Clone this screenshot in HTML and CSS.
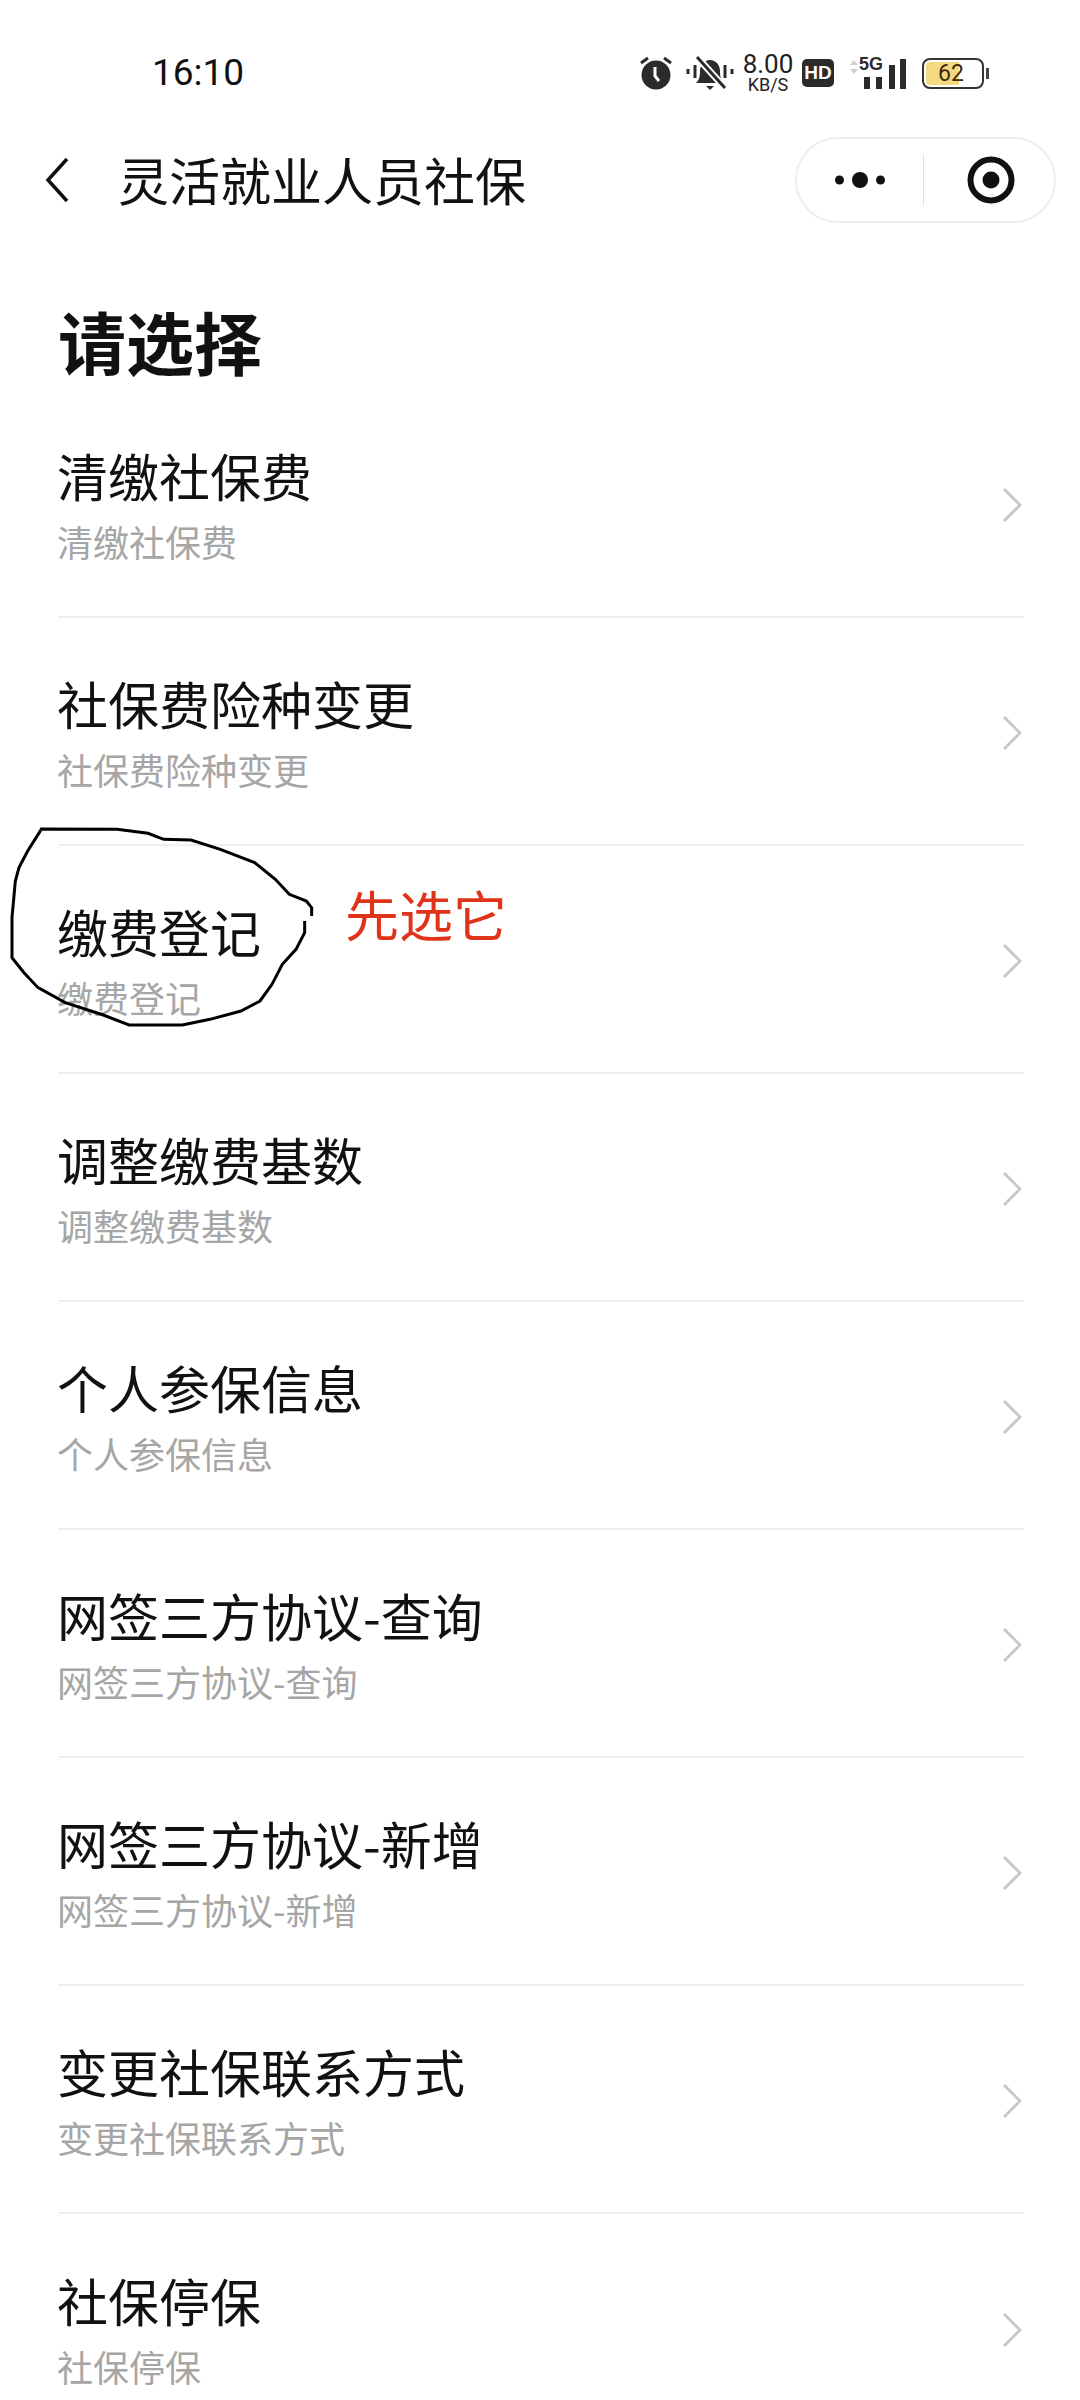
FILE: index.html
```html
<!DOCTYPE html>
<html lang="zh-CN">
<head>
    <meta charset="UTF-8">
    <title>灵活就业人员社保</title>
    <link rel="stylesheet" href="styles.css">
</head>
<body>
    <div class="page">
        <div class="status-bar">
            <span class="time">16:10</span>
            <div class="status-icons">
                <svg class="ic-alarm" width="34" height="34" viewBox="0 0 34 34">
                    <circle cx="17" cy="19" r="14.5" fill="#2b2b2b"/>
                    <path d="M2 7l7-5M32 7l-7-5" stroke="#2b2b2b" stroke-width="3" fill="none"/>
                    <path d="M16 11v9l4 5" stroke="#fff" stroke-width="3" fill="none"/>
                </svg>
                <svg class="ic-bell" width="48" height="36" viewBox="0 0 48 36">
                    <path d="M2 14v5M9 10v13M39 10v13M46 14v5" stroke="#2b2b2b" stroke-width="3" fill="none"/>
                    <path d="M10 28c3-3 4-6 4-12 0-6 4-11 10-11s10 5 10 11c0 6 1 9 4 12z" fill="#2b2b2b"/>
                    <path d="M20 31h8l-4 4z" fill="#2b2b2b"/>
                    <path d="M11 2l28 31" stroke="#fff" stroke-width="7" fill="none"/>
                    <path d="M11 2l28 31" stroke="#2b2b2b" stroke-width="3" fill="none"/>
                </svg>
                <div class="speed">
                    <span class="speed-num">8.00</span>
                    <span class="speed-unit">KB/S</span>
                </div>
                <span class="hd">HD</span>
                <div class="signal">
                    <svg width="56" height="32" viewBox="0 0 56 32">
                        <path d="M0 8l4-5 4 5zM0 12l4 5 4-5z" fill="#cfcfcf"/>
                        <path d="M14 20h6v12h-6zM26 20h6v12h-6zM39 8h6v24h-6zM50 2h6v30h-6z" fill="#2b2b2b"/>
                    </svg>
                    <span class="signal-label">5G</span>
                </div>
                <div class="battery">
                    <div class="battery-body">
                        <div class="battery-fill"></div>
                        <span class="battery-num">62</span>
                    </div>
                    <div class="battery-tip"></div>
                </div>
            </div>
        </div>

        <div class="nav">
            <svg class="back" width="24" height="46" viewBox="0 0 24 46">
                <path d="M22 2L3 23l19 21" stroke="#111" stroke-width="3.5" fill="none"/>
            </svg>
            <span class="nav-title">灵活就业人员社保</span>
            <div class="capsule">
                <div class="capsule-part">
                    <svg width="50" height="20" viewBox="0 0 50 20">
                        <circle cx="4.500" cy="10" r="4.500" fill="#111"/>
                        <circle cx="25" cy="10" r="8" fill="#111"/>
                        <circle cx="45.500" cy="10" r="4.500" fill="#111"/>
                    </svg>
                </div>
                <div class="capsule-line"></div>
                <div class="capsule-part capsule-record">
                    <svg width="48" height="48" viewBox="0 0 48 48">
                        <circle cx="24" cy="24" r="20.500" stroke="#111" stroke-width="6" fill="none"/>
                        <circle cx="24" cy="24" r="8.500" fill="#111"/>
                    </svg>
                </div>
            </div>
        </div>

        <h1 class="heading">请选择</h1>

        <div class="list">
            <div class="row">
                <div class="row-text">
                    <div class="row-title">清缴社保费</div>
                    <div class="row-sub">清缴社保费</div>
                </div>
                <svg class="arrow" width="20" height="36" viewBox="0 0 20 36"><path d="M2 2l16 16L2 34" stroke="#c8c8c8" stroke-width="3" fill="none"/></svg>
            </div>
            <div class="row">
                <div class="row-text">
                    <div class="row-title">社保费险种变更</div>
                    <div class="row-sub">社保费险种变更</div>
                </div>
                <svg class="arrow" width="20" height="36" viewBox="0 0 20 36"><path d="M2 2l16 16L2 34" stroke="#c8c8c8" stroke-width="3" fill="none"/></svg>
            </div>
            <div class="row">
                <div class="row-text">
                    <div class="row-title">缴费登记</div>
                    <div class="row-sub">缴费登记</div>
                </div>
                <svg class="arrow" width="20" height="36" viewBox="0 0 20 36"><path d="M2 2l16 16L2 34" stroke="#c8c8c8" stroke-width="3" fill="none"/></svg>
                <!-- hand drawn mark -->
                <svg class="scribble" width="320" height="240" viewBox="0 0 960 720">
                    <path d="M122 88L124 84 351 85 444 97 491 115 573 117 661 145 764 185 826 235 868 280 919 300 935 320 935 345" stroke="#000" stroke-width="9" fill="none"/>
                    <path d="M914 360V395L888 445 847 490 816 550 780 600 723 630 630 655 547 672H387L310 642 196 605 114 560 72 515 36 470V350L46 240 57 200 83 150 122 88" stroke="#000" stroke-width="9" fill="none"/>
                </svg>
                <span class="note">先选它</span>
            </div>
            <div class="row">
                <div class="row-text">
                    <div class="row-title">调整缴费基数</div>
                    <div class="row-sub">调整缴费基数</div>
                </div>
                <svg class="arrow" width="20" height="36" viewBox="0 0 20 36"><path d="M2 2l16 16L2 34" stroke="#c8c8c8" stroke-width="3" fill="none"/></svg>
            </div>
            <div class="row">
                <div class="row-text">
                    <div class="row-title">个人参保信息</div>
                    <div class="row-sub">个人参保信息</div>
                </div>
                <svg class="arrow" width="20" height="36" viewBox="0 0 20 36"><path d="M2 2l16 16L2 34" stroke="#c8c8c8" stroke-width="3" fill="none"/></svg>
            </div>
            <div class="row">
                <div class="row-text">
                    <div class="row-title">网签三方协议-查询</div>
                    <div class="row-sub">网签三方协议-查询</div>
                </div>
                <svg class="arrow" width="20" height="36" viewBox="0 0 20 36"><path d="M2 2l16 16L2 34" stroke="#c8c8c8" stroke-width="3" fill="none"/></svg>
            </div>
            <div class="row">
                <div class="row-text">
                    <div class="row-title">网签三方协议-新增</div>
                    <div class="row-sub">网签三方协议-新增</div>
                </div>
                <svg class="arrow" width="20" height="36" viewBox="0 0 20 36"><path d="M2 2l16 16L2 34" stroke="#c8c8c8" stroke-width="3" fill="none"/></svg>
            </div>
            <div class="row">
                <div class="row-text">
                    <div class="row-title">变更社保联系方式</div>
                    <div class="row-sub">变更社保联系方式</div>
                </div>
                <svg class="arrow" width="20" height="36" viewBox="0 0 20 36"><path d="M2 2l16 16L2 34" stroke="#c8c8c8" stroke-width="3" fill="none"/></svg>
            </div>
            <div class="row">
                <div class="row-text">
                    <div class="row-title">社保停保</div>
                    <div class="row-sub">社保停保</div>
                </div>
                <svg class="arrow" width="20" height="36" viewBox="0 0 20 36"><path d="M2 2l16 16L2 34" stroke="#c8c8c8" stroke-width="3" fill="none"/></svg>
            </div>
        </div>
    </div>
</body>
</html>
```

FILE: styles.css
```css
* {
    box-sizing: border-box;
}

html,
body {
    margin: 0;
    background-color: #fff;
}

body {
    font-family: "Noto Sans CJK SC", "Noto Sans", sans-serif;
    color: #111;
}

.page {
    width: 1080px;
    height: 2400px;
    overflow: hidden;
}

.status-bar {
    height: 136px;
    padding: 55px 91px 0 152px;
    display: flex;
    justify-content: space-between;
    align-items: flex-start;
}

.time {
    font-family: Roboto, sans-serif;
    font-size: 37px;
    line-height: 36px;
    color: #111;
}

.status-icons {
    display: flex;
    align-items: center;
    height: 36px;
}

.ic-alarm {
    margin-right: 13px;
}

.ic-bell {
    margin-right: 8px;
}

.speed {
    width: 52px;
    margin-right: 8px;
    display: flex;
    flex-direction: column;
    align-items: center;
    font-family: Roboto, sans-serif;
    color: #222;
}

.speed-num {
    font-size: 26px;
    line-height: 23px;
}

.speed-unit {
    font-size: 18px;
    line-height: 18px;
}

.hd {
    width: 32px;
    height: 28px;
    margin-right: 16px;
    border-radius: 5px;
    background-color: #2b2b2b;
    color: #fff;
    font-family: "Liberation Sans", sans-serif;
    font-size: 19px;
    font-weight: bold;
    line-height: 28px;
    text-align: center;
}

.signal {
    position: relative;
    width: 56px;
    height: 32px;
    margin-right: 16px;
}

.signal svg {
    display: block;
}

.signal-label {
    position: absolute;
    left: 9px;
    top: -3px;
    font-family: "Liberation Sans", sans-serif;
    font-size: 18px;
    font-weight: bold;
    line-height: 20px;
    color: #2b2b2b;
}

.battery {
    display: flex;
    align-items: center;
}

.battery-body {
    position: relative;
    width: 62px;
    height: 31px;
    padding: 2px;
    border: 2px solid #333;
    border-radius: 8px;
}

.battery-fill {
    width: 62%;
    height: 100%;
    border-radius: 4px 0 0 4px;
    background-color: #f5d980;
}

.battery-num {
    position: absolute;
    left: 0;
    right: 4px;
    top: 0;
    font-family: Roboto, sans-serif;
    font-size: 23px;
    line-height: 27px;
    text-align: center;
    color: #3a2a10;
}

.battery-tip {
    width: 3px;
    height: 11px;
    margin-left: 2px;
    background-color: #444;
}

.nav {
    height: 88px;
    padding: 0 24px 0 45px;
    display: flex;
    align-items: center;
}

.back {
    flex-shrink: 0;
}

.nav-title {
    margin-left: 49px;
    margin-bottom: 3px;
    font-size: 51px;
    line-height: 84px;
    color: #111;
}

.capsule {
    width: 261px;
    height: 86px;
    margin-left: auto;
    border: 2px solid #eee;
    border-radius: 43px;
    display: flex;
    align-items: center;
}

.capsule-part {
    flex: 1;
    display: flex;
    justify-content: center;
    align-items: center;
}

.capsule-record {
    padding-left: 5px;
}

.capsule-line {
    width: 1px;
    height: 52px;
    background-color: #e3e3e3;
}

.heading {
    height: 166px;
    margin: 0;
    padding: 0 0 0 58px;
    font-size: 68px;
    font-weight: bold;
    line-height: 233px;
    color: #111;
}

.list {
    margin: 0 56px 0 58px;
}

.row {
    position: relative;
    height: 228px;
    display: flex;
    justify-content: space-between;
    align-items: center;
    border-bottom: 2px solid #f0f0f0;
}

.row:last-child {
    border-bottom: none;
}

.row-text {
    margin-left: -1px;
    padding-top: 9px;
}

.row-title {
    font-size: 51px;
    line-height: 66px;
    color: #111;
}

.row-sub {
    font-size: 36px;
    line-height: 66px;
    color: #a6a6a6;
}

.arrow {
    margin-top: 3px;
    margin-right: 2px;
}

.scribble {
    position: absolute;
    left: -58px;
    top: -45px;
    overflow: visible;
}

.note {
    position: absolute;
    left: 287px;
    top: 32px;
    font-size: 54px;
    line-height: 72px;
    color: #e0341a;
}
```
